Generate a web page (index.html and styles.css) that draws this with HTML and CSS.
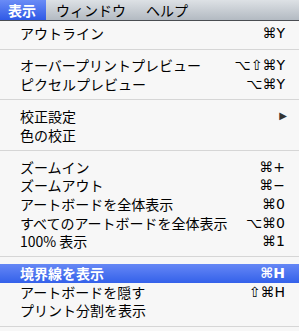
FILE: index.html
```html
<!DOCTYPE html>
<html lang="ja">
<head>
    <meta charset="UTF-8">
    <title>表示メニュー</title>
    <link rel="stylesheet" href="styles.css">
</head>
<body>
    <div class="menubar">
        <span class="menu-title active">表示</span>
        <span class="menu-title">ウィンドウ</span>
        <span class="menu-title">ヘルプ</span>
    </div>

    <div class="menu">
        <div class="item"><span>アウトライン</span><span class="key">⌘Y</span></div>
        <div class="sep"></div>
        <div class="item"><span>オーバープリントプレビュー</span><span class="key">⌥⇧⌘Y</span></div>
        <div class="item"><span>ピクセルプレビュー</span><span class="key">⌥⌘Y</span></div>
        <div class="sep"></div>
        <div class="item"><span>校正設定</span><span class="arrow">▶</span></div>
        <div class="item"><span>色の校正</span></div>
        <div class="sep"></div>
        <div class="item"><span>ズームイン</span><span class="key">⌘+</span></div>
        <div class="item"><span>ズームアウト</span><span class="key">⌘−</span></div>
        <div class="item"><span>アートボードを全体表示</span><span class="key">⌘0</span></div>
        <div class="item"><span>すべてのアートボードを全体表示</span><span class="key">⌥⌘0</span></div>
        <div class="item"><span>100% 表示</span><span class="key">⌘1</span></div>
        <div class="sep"></div>
        <div class="item selected"><span>境界線を表示</span><span class="key">⌘H</span></div>
        <div class="item"><span>アートボードを隠す</span><span class="key">⇧⌘H</span></div>
        <div class="item"><span>プリント分割を表示</span></div>
        <div class="sep last"></div>
    </div>
</body>
</html>
```

FILE: styles.css
```css
body {
    margin: 0;
    width: 299px;
    height: 331px;
    overflow: hidden;
    background-color: #f7f7f7;
    font-family: "Noto Sans CJK JP", "DejaVu Sans", sans-serif;
    font-size: 14px;
    color: #000;
}
.menubar {
    display: flex;
    height: 20px;
    background: linear-gradient(#dde1e5, #b3bac2);
    border-bottom: 1px solid #4a4d52;
}
.menu-title {
    padding: 0 10px;
    line-height: 20px;
    font-size: 14px;
}
.menu-title.active {
    padding: 0 10px 0 8px;
    color: #fff;
    font-weight: bold;
    background: linear-gradient(#6a8cf6, #2f5ae6);
}
.menu {
    padding-top: 3px;
    background-color: #f7f7f7;
}
.item {
    display: flex;
    justify-content: space-between;
    align-items: center;
    height: 18.6px;
    padding: 0 14px 0 20px;
    line-height: 18px;
}
.item.selected {
    color: #fff;
    font-weight: bold;
    background: linear-gradient(#6587f5, #3461ea);
}
.key {
    font-family: "DejaVu Sans", sans-serif;
    font-size: 14px;
}
.arrow {
    font-family: "DejaVu Sans", sans-serif;
    font-size: 10px;
    color: #333;
    margin-right: -2px;
}
.sep {
    height: 6px;
    margin-bottom: 6.5px;
    border-bottom: 1px solid #d6d6d6;
}
.sep.last {
    margin-bottom: 0;
}
```
